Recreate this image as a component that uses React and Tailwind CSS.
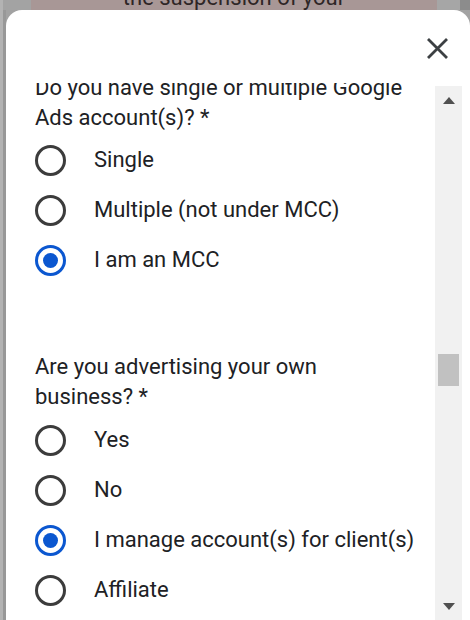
import React from "react";

function Radio({ checked }) {
  return checked ? (
    <div className="w-[31px] h-[31px] rounded-full border-[3px] border-[#0b57d0] flex items-center justify-center shrink-0">
      <div className="w-[15px] h-[15px] rounded-full bg-[#0b57d0]" />
    </div>
  ) : (
    <div className="w-[31px] h-[31px] rounded-full border-[3px] border-[#3c3c3c] shrink-0" />
  );
}

function Option({ label, checked }) {
  return (
    <div className="h-[50px] flex items-center">
      <Radio checked={checked} />
      <span className="ml-[28px] text-[22px] leading-[30px] text-[#202124] whitespace-nowrap">{label}</span>
    </div>
  );
}

export default function App() {
  return (
    <div
      className="w-[470px] h-[620px] overflow-hidden bg-[#a2a2a2] flex flex-col"
      style={{ fontFamily: "Roboto, 'Liberation Sans', sans-serif" }}
    >
      {/* background strip */}
      <div className="h-[10px] flex shrink-0">
        <div className="w-[3px] bg-[#b3b3b3]" />
        <div className="w-[28px] bg-[#a3a3a3]" />
        <div className="w-[406px] bg-[#a89796] overflow-hidden relative">
          <div className="absolute left-0 right-0 top-[-17px] text-center text-[22px] leading-[30px] text-[#2e2626] whitespace-nowrap">
            the suspension of your
          </div>
        </div>
        <div className="w-[23px] bg-[#a6a6a6]" />
        <div className="flex-1 bg-[#8c8c8c]" />
      </div>
      <div className="flex-1 flex min-h-0">
        <div className="w-[3px] bg-[#b3b3b3]" />
        <div className="w-[3px] bg-[#989898]" />
        <div className="flex-1 bg-white rounded-t-[16px] flex flex-col min-h-0">
          {/* header */}
          <div className="h-[73px] flex justify-end items-start pt-[27px] pr-[21px] shrink-0">
            <svg width="23" height="23" viewBox="0 0 23 23">
              <path d="M2 2 L21 21 M21 2 L2 21" stroke="#3c4043" strokeWidth="2.8" strokeLinecap="butt" />
            </svg>
          </div>
          {/* body */}
          <div className="flex-1 flex min-h-0">
            <div className="flex-1 overflow-hidden pl-[29px]">
              <div className="mt-[-10px]">
                <div className="text-[22px] leading-[30px] text-[#202124] whitespace-nowrap">
                  Do you have single or multiple Google
                  <br />
                  Ads account(s)? *
                </div>
                <div className="mt-[2px]">
                  <Option label="Single" />
                  <Option label="Multiple (not under MCC)" />
                  <Option label="I am an MCC" checked />
                </div>
                <div className="mt-[67px] text-[22px] leading-[30px] text-[#202124] whitespace-nowrap">
                  Are you advertising your own
                  <br />
                  business? *
                </div>
                <div className="mt-[3px]">
                  <Option label="Yes" />
                  <Option label="No" />
                  <Option label="I manage account(s) for client(s)" checked />
                  <Option label="Affiliate" />
                </div>
              </div>
            </div>
            {/* scrollbar */}
            <div className="w-[27px] mt-[3px] bg-[#f1f1f1] flex flex-col items-center justify-between shrink-0">
              <div className="h-[28px] flex items-center justify-center">
                <svg width="12" height="7" viewBox="0 0 12 7">
                  <path d="M6 0 L12 7 L0 7 Z" fill="#505050" />
                </svg>
              </div>
              <div className="flex-1 w-full relative">
                <div className="absolute left-[3px] right-[3px] top-[240px] h-[32px] bg-[#c1c1c1]" />
              </div>
              <div className="h-[22px] flex items-start justify-center pt-[5px]">
                <svg width="12" height="7" viewBox="0 0 12 7">
                  <path d="M0 0 L12 0 L6 7 Z" fill="#505050" />
                </svg>
              </div>
            </div>
            <div className="w-[8px] shrink-0" />
          </div>
        </div>
      </div>
    </div>
  );
}
